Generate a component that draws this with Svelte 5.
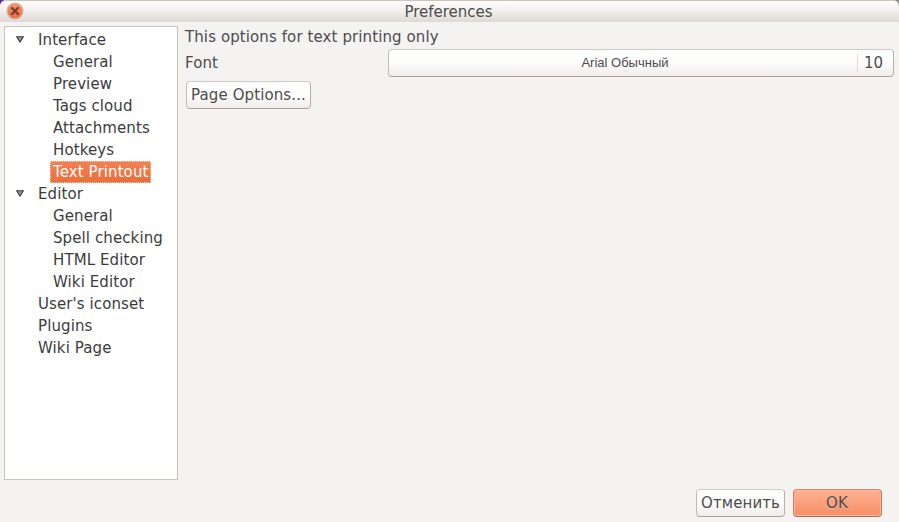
<script>
  const tree = [
    { label: 'Interface', children: ['General', 'Preview', 'Tags cloud', 'Attachments', 'Hotkeys', 'Text Printout'] },
    { label: 'Editor', children: ['General', 'Spell checking', 'HTML Editor', 'Wiki Editor'] },
    { label: "User's iconset", children: [] },
    { label: 'Plugins', children: [] },
    { label: 'Wiki Page', children: [] }
  ];
  let selected = $state('Text Printout');
</script>

<div class="desktop">
  <div class="window">
    <header class="titlebar">
      <button class="close" aria-label="Close">
        <svg width="18" height="18" viewBox="0 0 18 18">
          <defs>
            <linearGradient id="orb" x1="0" y1="0" x2="0" y2="1">
              <stop offset="0" stop-color="#f79471" />
              <stop offset="1" stop-color="#ee6c3b" />
            </linearGradient>
          </defs>
          <circle cx="9" cy="9" r="8" fill="url(#orb)" stroke="#cbbcb4" stroke-width="1.2" />
          <path d="M5.3 5.3L12.7 12.7M12.7 5.3L5.3 12.7" stroke="#7b4027" stroke-width="2.3" />
        </svg>
      </button>
      <span class="title">Preferences</span>
    </header>

    <div class="body">
      <nav class="tree">
        {#each tree as node}
          <div class="row">
            <span class="arrow">
              {#if node.children.length}
                <svg width="8" height="7" viewBox="0 0 8 7">
                  <path d="M0.7 0.8H7.3L4 6.1Z" fill="#999" stroke="#3c3c3c" stroke-width="1.1" />
                </svg>
              {/if}
            </span>
            <span class="label">{node.label}</span>
          </div>
          {#each node.children as child}
            <div class="row child">
              <span class="label" class:selected={child === selected}>{child}</span>
            </div>
          {/each}
        {/each}
      </nav>

      <main class="page">
        <div class="note">This options for text printing only</div>
        <div class="field">
          <span>Font</span>
          <button class="btn font">
            <span class="face">Arial Обычный</span>
            <span class="size">10</span>
          </button>
        </div>
        <button class="btn options">Page Options...</button>
      </main>
    </div>

    <footer class="actions">
      <button class="btn">Отменить</button>
      <button class="btn ok">OK</button>
    </footer>
  </div>
</div>

<style>
  .desktop {
    width: 899px;
    height: 522px;
    overflow: hidden;
    background: linear-gradient(90deg, #5b2a9c 0, #5b2a9c 3px, #8c8682 8px);
  }
  .window {
    box-sizing: border-box;
    display: flex;
    flex-direction: column;
    height: 522px;
    background: #f4f3f1;
    border-radius: 6px 6px 0 0;
    overflow: hidden;
    font: 15px/22px 'DejaVu Sans', sans-serif;
    letter-spacing: 0.1px;
    color: #4c4c4c;
  }
  button {
    font: inherit;
    letter-spacing: inherit;
    color: inherit;
    padding: 0;
    margin: 0;
  }
  .titlebar {
    box-sizing: border-box;
    flex: none;
    display: grid;
    grid-template-columns: 29px 1fr 31px;
    align-items: center;
    height: 22px;
    border-top: 1px solid #d0c3b9;
    background: linear-gradient(#fefdfd, #f3f0ed 45%, #ded9d3);
    border-radius: 6px 6px 0 0;
  }
  .close {
    display: flex;
    width: 18px;
    height: 18px;
    margin-left: 6px;
    margin-bottom: 1px;
    border: 0;
    background: none;
  }
  .title {
    text-align: center;
    line-height: 20px;
    letter-spacing: 0;
  }
  .body {
    display: flex;
    height: 458px;
    padding: 4px 4px 0;
    box-sizing: border-box;
    gap: 7px;
  }
  .tree {
    box-sizing: border-box;
    flex: none;
    width: 174px;
    height: 454px;
    padding-top: 2px;
    border: 1px solid #ccc2bb;
    background: #fff;
    color: #3c3c3c;
  }
  .row {
    display: flex;
    height: 22px;
    white-space: nowrap;
  }
  .arrow {
    display: flex;
    align-items: center;
    width: 20px;
    padding-left: 11px;
    padding-bottom: 1px;
  }
  .child {
    padding-left: 45px;
  }
  .label {
    box-sizing: border-box;
    height: 22px;
    padding: 0 2px;
  }
  .child .label {
    padding: 0 3px;
  }
  .selected {
    background: linear-gradient(#f58052, #ec6d3b);
    color: #fff;
    outline: 1px dotted #fbd3c2;
    outline-offset: -1px;
  }
  .page {
    flex: 1;
    display: flex;
    flex-direction: column;
    align-items: flex-start;
  }
  .note {
    height: 23px;
  }
  .field {
    align-self: stretch;
    display: flex;
    align-items: center;
    justify-content: space-between;
    height: 28px;
  }
  .btn {
    box-sizing: border-box;
    height: 28px;
    border: 1px solid;
    border-color: #cfc7c2 #bbaea6 #b1a198 #c4bab3;
    border-radius: 4px;
    background: linear-gradient(#fff 0, #fdfdfc 50%, #efebe8 100%);
    line-height: 24px;
    white-space: nowrap;
  }
  .font {
    display: flex;
    align-items: center;
    width: 506px;
    margin-right: 1px;
  }
  .face {
    flex: 1;
    font: 13px/24px 'Liberation Sans', sans-serif;
    letter-spacing: 0;
    text-align: center;
    padding-left: 4px;
  }
  .size {
    height: 18px;
    line-height: 19px;
    padding: 0 10px 0 6px;
    letter-spacing: 0;
    border-left: 1px solid #dfd9d5;
  }
  .options {
    width: 125px;
    margin: 4px 0 0 1px;
  }
  .actions {
    display: flex;
    justify-content: flex-end;
    gap: 8px;
    padding: 9px 17px 0 0;
  }
  .actions .btn {
    width: 89px;
  }
  .actions .ok {
    padding-right: 1px;
    border-color: #cf8a6c #bd7a5c #aa7157 #c38265;
    background: linear-gradient(#ffb293, #f99f7c 50%, #f58e65);
    box-shadow: inset 0 0 0 1px #ffb598;
    text-shadow: 0 1px 0 rgba(255, 255, 255, 0.35);
  }
</style>
